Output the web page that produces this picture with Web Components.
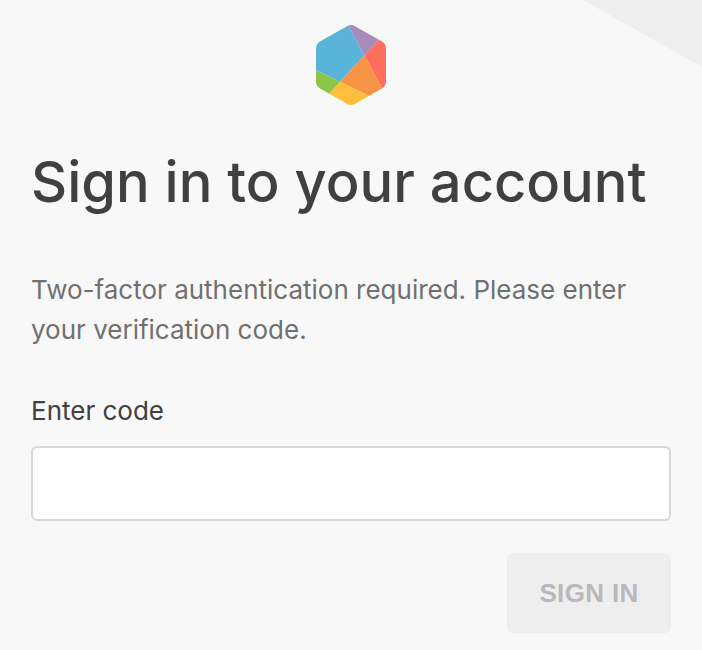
<!DOCTYPE html>
<html lang="en">
<head>
    <meta charset="UTF-8">
    <title>Sign in</title>
    <style>
        body{
            margin: 0;
            background: #f8f8f8;
            font-family: Inter, "Liberation Sans", sans-serif;
            color: #404040;
        }
    </style>
</head>
<body>
    <sign-in-page>
        <brand-logo slot="logo"></brand-logo>
        <span slot="title">Sign in to your account</span>
        <span slot="message">Two-factor authentication required. Please enter your verification code.</span>
        <code-field>Enter code</code-field>
        <submit-button>SIGN IN</submit-button>
    </sign-in-page>

    <script>
        class BrandLogo extends HTMLElement{
            constructor(){
                super()
                this.root = this.attachShadow({mode : 'open'})
                this.render()
            }
            render(){
                this.root.innerHTML = `
                    <style>
                        :host{
                            display: block;
                            width: 70px;
                            height: 80px;
                        }
                        svg{
                            display: block;
                        }
                    </style>
                    <svg width="70" height="80" viewBox="0 0 70 80">
                        <clipPath id="hexagon">
                            <path d="M31 1.2Q35 -1.2 39 1.2L66 16.6Q70 19 70 23.5V56.5Q70 61 66 63.4L39 78.8Q35 81.2 31 78.8L4 63.4Q0 61 0 56.5V23.5Q0 19 4 16.6Z"/>
                        </clipPath>
                        <g clip-path="url(#hexagon)">
                            <path fill="#5ab4d9" d="M0 0H32.2L48.4 30.6L24 56.7L0 45.2Z"/>
                            <path fill="#a78bba" d="M32.2 0H76.8L48.4 30.6Z"/>
                            <path fill="#ff6f5c" d="M76.8 0V83.5L48.4 30.6Z"/>
                            <path fill="#f79344" d="M48.4 30.6L74.9 80H72L24 56.7Z"/>
                            <path fill="#ffbe3b" d="M24 56.7L72 80H2.2Z"/>
                            <path fill="#8bc54a" d="M0 45.2L24 56.7L2.2 80H0Z"/>
                        </g>
                    </svg>
                `;
            }
        }
        customElements.define('brand-logo', BrandLogo)

        class CodeField extends HTMLElement{
            constructor(){
                super()
                this.root = this.attachShadow({mode : 'open'})
                this.render()
            }
            render(){
                this.root.innerHTML = `
                    <style>
                        :host{
                            display: block;
                            margin-top: 41px;
                        }
                        label{
                            display: block;
                            font-size: 26px;
                            line-height: 40px;
                        }
                        input{
                            display: block;
                            box-sizing: border-box;
                            width: 100%;
                            height: 75px;
                            margin: 15px 0 0;
                            padding: 0 20px;
                            border: 2px solid #d8d8d8;
                            border-radius: 6px;
                            background: #fff;
                            font: inherit;
                            font-size: 26px;
                            color: inherit;
                        }
                    </style>
                    <label for="code"><slot></slot></label>
                    <input id="code" type="text" autocomplete="off">
                `;
            }
        }
        customElements.define('code-field', CodeField)

        class SubmitButton extends HTMLElement{
            constructor(){
                super()
                this.root = this.attachShadow({mode : 'open'})
                this.render()
            }
            render(){
                this.root.innerHTML = `
                    <style>
                        :host{
                            display: flex;
                            justify-content: flex-end;
                            margin-top: 32px;
                        }
                        button{
                            width: 164px;
                            height: 80px;
                            padding: 0;
                            border: 0;
                            border-radius: 6px;
                            background: #eee;
                            color: #b9b9b9;
                            font: bold 26px "Liberation Sans", Arial, sans-serif;
                            letter-spacing: 0.35px;
                        }
                    </style>
                    <button disabled><slot></slot></button>
                `;
            }
        }
        customElements.define('submit-button', SubmitButton)

        class SignInPage extends HTMLElement{
            constructor(){
                super()
                this.root = this.attachShadow({mode : 'open'})
                this.render()
            }
            render(){
                this.root.innerHTML = `
                    <style>
                        :host{
                            display: block;
                            box-sizing: border-box;
                            position: relative;
                            height: 650px;
                            padding: 25px 31px 0;
                            overflow: hidden;
                        }
                        .corner{
                            position: absolute;
                            top: 0;
                            right: 0;
                            width: 119px;
                            height: 67px;
                            background: #eee;
                            clip-path: polygon(0 0, 100% 0, 100% 100%);
                        }
                        .logo{
                            display: flex;
                            justify-content: center;
                        }
                        h1{
                            margin: 43px 0 0;
                            font-size: 56px;
                            font-weight: 500;
                            line-height: 68px;
                            white-space: nowrap;
                        }
                        p{
                            margin: 54px 0 0;
                            font-size: 26px;
                            line-height: 40px;
                            color: #707070;
                        }
                    </style>
                    <div class="corner"></div>
                    <div class="logo"><slot name="logo"></slot></div>
                    <h1><slot name="title"></slot></h1>
                    <p><slot name="message"></slot></p>
                    <slot></slot>
                `;
            }
        }
        customElements.define('sign-in-page', SignInPage)
    </script>
</body>
</html>
